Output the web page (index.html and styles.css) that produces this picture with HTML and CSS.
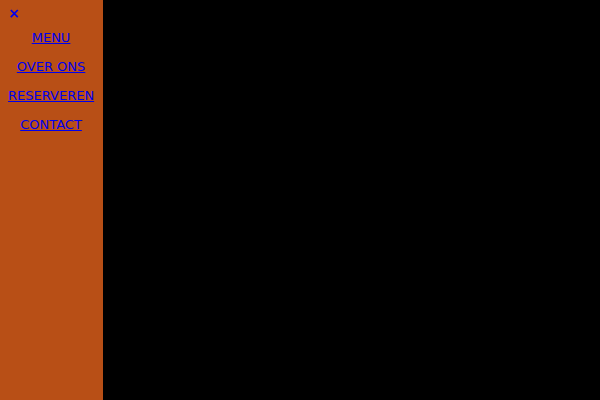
FILE: index.html
```html
<!DOCTYPE html>
<html lang="nl">
<head>
  <meta charset="UTF-8">
  <meta name="viewport" content="width=device-width, initial-scale=1.0">
  <title>Menu</title>
  <link rel="stylesheet" href="styles.css">
</head>
<body>
  <nav class="sidebar">
    <a href="#" class="close" aria-label="Sluiten">
      <svg class="close-icon" viewBox="0 0 12 10" aria-hidden="true">
        <path d="M2.8 1L9.8 8.2M9.8 1L2.8 8.2"/>
      </svg>
    </a>
    <ul class="links">
      <li><a href="#menu">MENU</a></li>
      <li><a href="#over-ons">OVER ONS</a></li>
      <li><a href="#reserveren">RESERVEREN</a></li>
      <li><a href="#contact">CONTACT</a></li>
    </ul>
  </nav>
</body>
</html>
```
FILE: styles.css
```css
body {
  display: flex;
  min-height: 100vh;
  margin: 0;
  background-color: #000000;
  font-family: "DejaVu Sans", sans-serif;
  font-size: 13px;
}

.sidebar {
  padding: 9px 9px 9px 8px;
  background-color: #b84f16;
}

.close {
  display: block;
  width: 12px;
  height: 10px;
}

.close-icon {
  display: block;
  width: 12px;
  height: 10px;
  fill: none;
  stroke: #0000ee;
  stroke-width: 1.7;
}

.links {
  display: flex;
  flex-direction: column;
  gap: 13px;
  margin: 11px 0 0;
  padding: 0;
  list-style: none;
  line-height: 16px;
  text-align: center;
}

.links a {
  color: #0000ee;
  text-underline-offset: 1px;
}
```
